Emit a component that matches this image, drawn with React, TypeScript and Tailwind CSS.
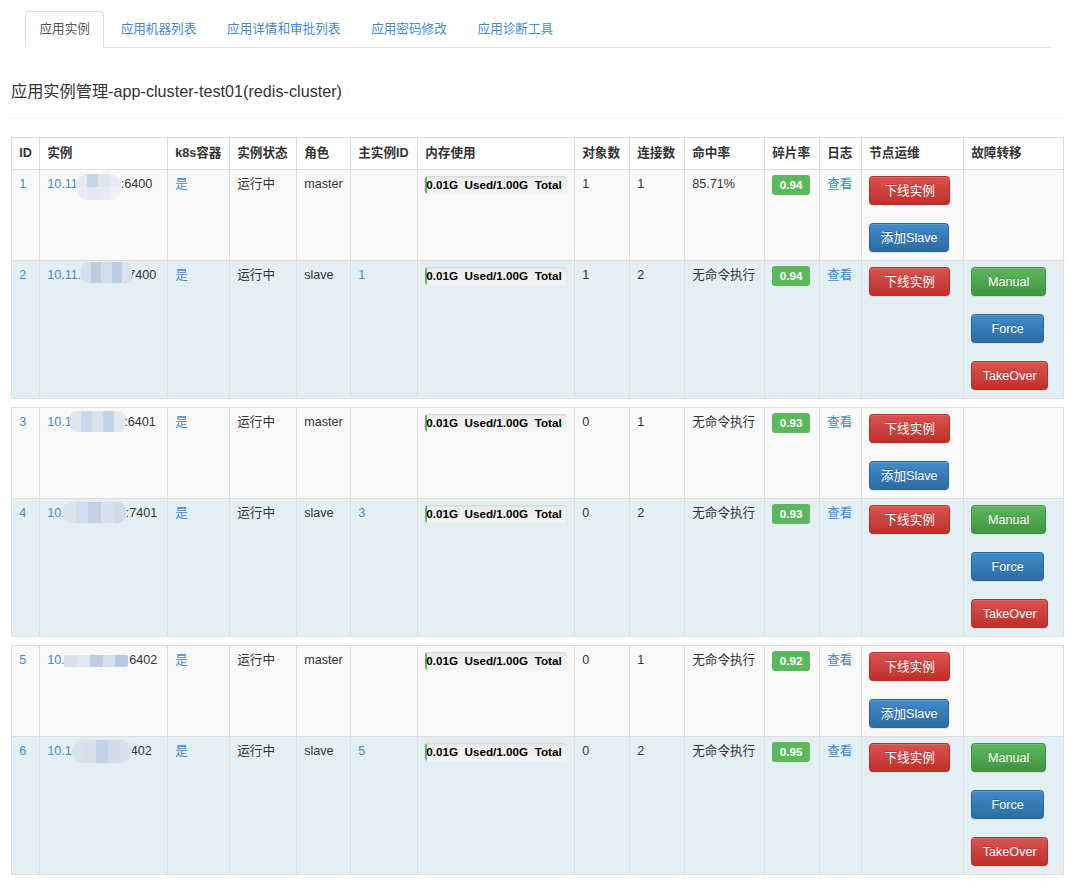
import React from "react";

const font = "font-['Liberation_Sans','Noto_Sans_CJK_SC',sans-serif]";

type BlurSpec = { w: number; left: number; right: number; top: number; h: number; r: number; cols: string[][] };

type Row = {
  id: string;
  prefix: string;
  suffix: string;
  blur: BlurSpec;
  role: string;
  master: string;
  objs: string;
  conns: string;
  hit: string;
  frag: string;
  slave: boolean;
};

const pair1: Row[] = [
  {
    id: "1",
    prefix: "10.11.",
    suffix: ":6400",
    blur: {
      w: 39.5, left: -5.5, right: 0, top: -2.5, h: 26, r: 12,
      cols: [
        ["#e2e8f0", "#c5d5e8", "#dde4ee", "#e8ecf2"],
        ["#eaeef4", "#e4e9f1", "#e6ebf2", "#eff2f6"],
      ],
    },
    role: "master", master: "", objs: "1", conns: "1", hit: "85.71%", frag: "0.94", slave: false,
  },
  {
    id: "2",
    prefix: "10.11.",
    suffix: "7400",
    blur: {
      w: 47, left: -0.5, right: -4, top: -5.5, h: 21, r: 7,
      cols: [["#d6e0eb", "#b9cde3", "#d2dde9", "#b9cde3", "#dae2ec"]],
    },
    role: "slave", master: "1", objs: "1", conns: "2", hit: "无命令执行", frag: "0.94", slave: true,
  },
];

const pair2: Row[] = [
  {
    id: "3",
    prefix: "10.1",
    suffix: ":6401",
    blur: {
      w: 52.5, left: -1.5, right: -1, top: -3, h: 21, r: 6,
      cols: [["#dfe6ef", "#c9d7e9", "#dae2ec", "#c3d3e7", "#e4e9f0"]],
    },
    role: "master", master: "", objs: "0", conns: "1", hit: "无命令执行", frag: "0.93", slave: false,
  },
  {
    id: "4",
    prefix: "10.",
    suffix: ":7401",
    blur: {
      w: 61, left: -1.5, right: -0.5, top: -3, h: 21, r: 8,
      cols: [["#dbe3ed", "#d3dde9", "#bfd1e6", "#d8e1ec", "#cfdbe8"]],
    },
    role: "slave", master: "3", objs: "0", conns: "2", hit: "无命令执行", frag: "0.93", slave: true,
  },
];

const pair3: Row[] = [
  {
    id: "5",
    prefix: "10.",
    suffix: "6402",
    blur: {
      w: 64.5, left: -0.5, right: 1, top: 2.5, h: 12, r: 2,
      cols: [["#d8e0eb", "#e3e8f0", "#bccde4", "#d8e0eb", "#b8cbe3"]],
    },
    role: "master", master: "", objs: "0", conns: "1", hit: "无命令执行", frag: "0.92", slave: false,
  },
  {
    id: "6",
    prefix: "10.1",
    suffix: "402",
    blur: {
      w: 59, left: 0, right: -1, top: -3.5, h: 23, r: 12,
      cols: [["#dbe2ea", "#d8e0ea", "#c2d3e6", "#d2dce8", "#dae1ea"]],
    },
    role: "slave", master: "5", objs: "0", conns: "2", hit: "无命令执行", frag: "0.95", slave: true,
  },
];

const colClasses = [
  "w-[28px]", "w-[128px]", "w-[62px]", "w-[67px]", "w-[54px]", "w-[67px]", "w-[157px]",
  "w-[55px]", "w-[55px]", "w-[80px]", "w-[55px]", "w-[42px]", "w-[102px]", "w-[100px]",
];

const headers = ["ID", "实例", "k8s容器", "实例状态", "角色", "主实例ID", "内存使用", "对象数", "连接数", "命中率", "碎片率", "日志", "节点运维", "故障转移"];

function Blur({ spec }: { spec: BlurSpec }) {
  return (
    <span className="relative inline-block align-top h-[16.5px]" style={{ width: spec.w }}>
      <span
        className="absolute flex flex-col overflow-hidden blur-[0.6px]"
        style={{ left: spec.left, right: spec.right, top: spec.top, height: spec.h, borderRadius: spec.r }}
      >
        {spec.cols.map((row, i) => (
          <span key={i} className="flex flex-1">
            {row.map((c, j) => (
              <span key={j} className="flex-1" style={{ background: c }} />
            ))}
          </span>
        ))}
      </span>
    </span>
  );
}

const btnBase =
  "flex items-center justify-center h-[29px] rounded-[3.6px] border text-white text-[12.6px] leading-none bg-linear-to-b [text-shadow:0_-1px_0_rgba(0,0,0,0.2)] shadow-[inset_0_1px_0_rgba(255,255,255,0.15),0_1px_1px_rgba(0,0,0,0.075)]";
const red = "border-[#b92c28] from-[#d9534f] to-[#c12e2a]";
const blue = "border-[#2b669a] from-[#428bca] to-[#2d6ca2]";
const green = "border-[#3e8f3e] from-[#5cb85c] to-[#419641]";

const td = "border border-[#ddd] px-[7.2px] pt-[6.5px] align-top text-left leading-[16.5px]";
const link = "text-[#428bca]";

function DataRow({ r }: { r: Row }) {
  const bg = r.slave ? "bg-[#e4eff4]" : "bg-[#f9f9f9]";
  return (
    <tr className={`${bg} ${r.slave ? "h-[138px]" : "h-[91px]"}`}>
      <td className={td}>
        <span className={link}>{r.id}</span>
      </td>
      <td className={`${td} whitespace-nowrap`}>
        <span className={link}>{r.prefix}</span>
        <Blur spec={r.blur} />
        <span className="text-[#333]">{r.suffix}</span>
      </td>
      <td className={td}>
        <span className={link}>是</span>
      </td>
      <td className={td}>运行中</td>
      <td className={td}>{r.role}</td>
      <td className={td}>
        <span className={link}>{r.master}</span>
      </td>
      <td className={td}>
        <div className="relative h-[17.5px] w-full overflow-hidden rounded-[3.6px] bg-linear-to-b from-[#ebebeb] to-[#f5f5f5] shadow-[inset_0_1px_2px_rgba(0,0,0,0.1)]">
          <div className="absolute left-0 top-0 bottom-0 w-[2px] bg-[#5cb85c]" />
          <div className="relative whitespace-nowrap pl-[1px] text-[11.7px] font-bold leading-[17.5px] text-black">
            0.01G{"\u00a0\u00a0"}Used/1.00G{"\u00a0\u00a0"}Total
          </div>
        </div>
      </td>
      <td className={td}>{r.objs}</td>
      <td className={td}>{r.conns}</td>
      <td className={`${td} whitespace-nowrap`}>{r.hit}</td>
      <td className={td}>
        <div className="-mt-[1.5px] h-[20px] w-[38px] rounded-[3px] bg-[#5cb85c] text-center text-[11.7px] font-bold leading-[20px] text-white">
          {r.frag}
        </div>
      </td>
      <td className={td}>
        <span className={link}>查看</span>
      </td>
      <td className={td}>
        <div className="flex flex-col items-start gap-[18px]">
          <div className={`${btnBase} ${red} w-[81px]`}>下线实例</div>
          {!r.slave && <div className={`${btnBase} ${blue} w-[80px]`}>添加Slave</div>}
        </div>
      </td>
      <td className={td}>
        {r.slave && (
          <div className="flex flex-col items-start gap-[18px]">
            <div className={`${btnBase} ${green} w-[75px]`}>Manual</div>
            <div className={`${btnBase} ${blue} w-[73px]`}>Force</div>
            <div className={`${btnBase} ${red} w-[77px]`}>TakeOver</div>
          </div>
        )}
      </td>
    </tr>
  );
}

function Table({ rows, header }: { rows: Row[]; header?: boolean }) {
  return (
    <table className="w-[1053px] table-fixed border-collapse border border-[#ddd] text-[12.6px] text-[#333]">
      <colgroup>
        {colClasses.map((c, i) => (
          <col key={i} className={c} />
        ))}
      </colgroup>
      {header && (
        <thead>
          <tr className="h-[32px] bg-white">
            {headers.map((h) => (
              <th key={h} className="border border-[#ddd] px-[7.2px] text-left align-middle font-bold leading-[16.5px] whitespace-nowrap">
                {h}
              </th>
            ))}
          </tr>
        </thead>
      )}
      <tbody>
        {rows.map((r) => (
          <DataRow key={r.id} r={r} />
        ))}
      </tbody>
    </table>
  );
}

const tabs = ["应用实例", "应用机器列表", "应用详情和审批列表", "应用密码修改", "应用诊断工具"];

export default function App() {
  return (
    <div className={`${font} min-h-[881px] w-[1068px] bg-white text-[12.6px] text-[#333]`}>
      <div className="pt-[11px] pl-[11px]">
        <ul className="ml-[14px] flex w-[1026px] border-b border-[#ddd]">
          {tabs.map((t, i) => (
            <li key={t} className="-mb-px mr-[1.8px]">
              <a
                className={
                  i === 0
                    ? "block h-[37px] rounded-t-[3.6px] border border-[#ddd] border-b-transparent bg-white px-[13.5px] leading-[35px] text-[#555]"
                    : "block h-[37px] rounded-t-[3.6px] border border-transparent px-[13.5px] leading-[35px] text-[#428bca]"
                }
              >
                {t}
              </a>
            </li>
          ))}
        </ul>
        <h4 className="mt-[35px] text-[16.2px] leading-[17.8px] font-normal text-[#333]">
          应用实例管理-app-cluster-test01(redis-cluster)
        </h4>
        <div className="mt-[17px] w-[1053px] border-t border-[#eee]" />
        <div className="mt-[18px] flex flex-col gap-[8px]">
          <Table rows={pair1} header />
          <Table rows={pair2} />
          <Table rows={pair3} />
        </div>
      </div>
    </div>
  );
}
